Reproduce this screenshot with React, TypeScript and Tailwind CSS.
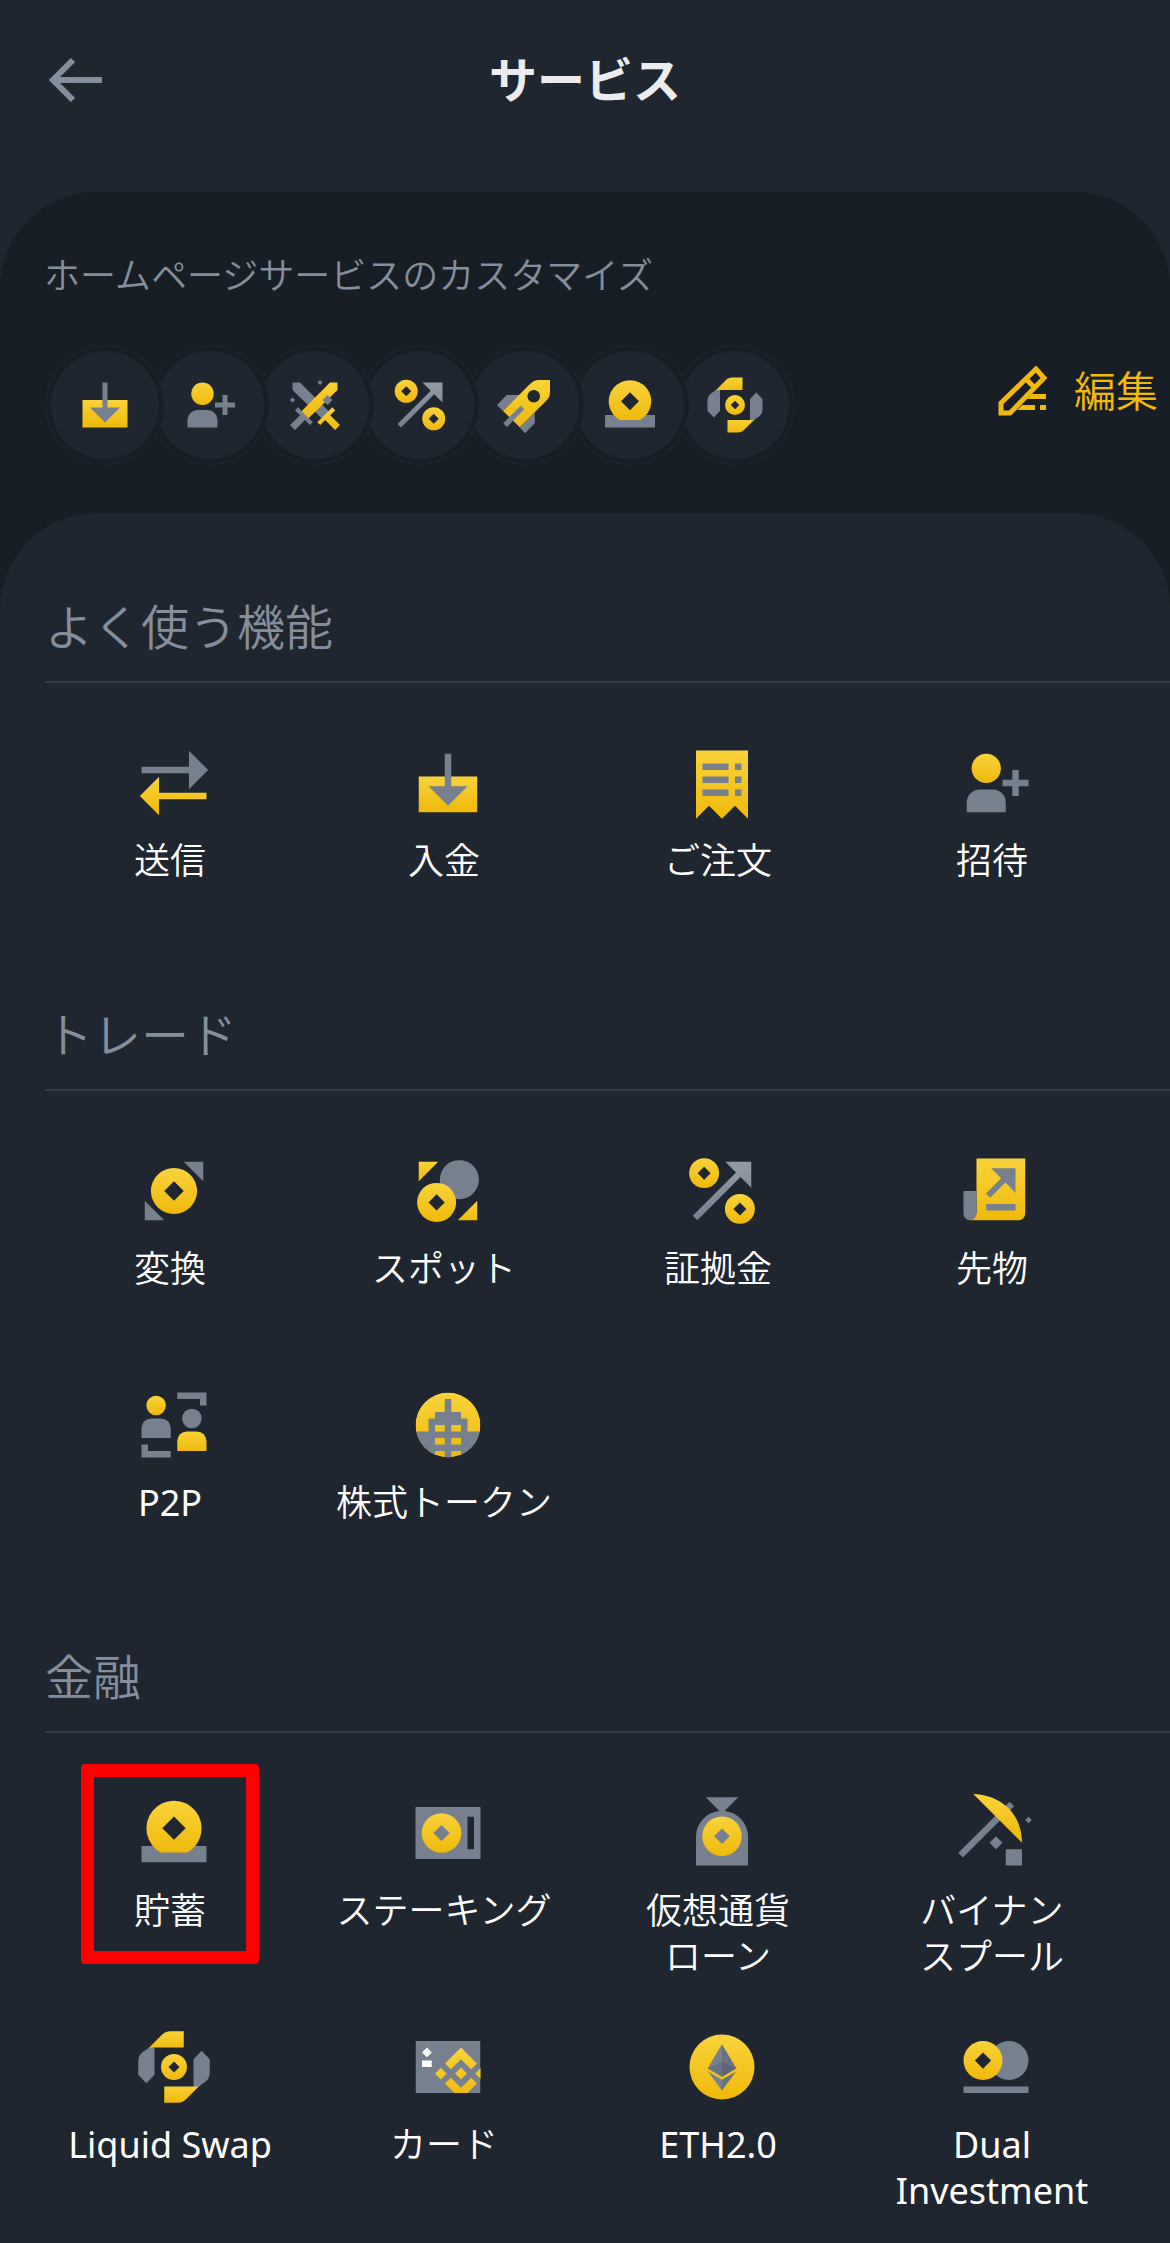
import type { ReactNode } from "react";

const GOLD = "url(#gold)";
const GRAY = "#76808f";
const INK = "#202630";

function GradientDefs() {
  return (
    <svg className="absolute h-0 w-0" aria-hidden="true">
      <defs>
        <linearGradient id="gold" x1="0" y1="0" x2="0" y2="1">
          <stop offset="0" stopColor="#f8d33a" />
          <stop offset="1" stopColor="#f0b90b" />
        </linearGradient>
        <linearGradient id="steel" x1="0" y1="0" x2="0" y2="1">
          <stop offset="0" stopColor="#929aa5" />
          <stop offset="1" stopColor="#76808f" />
        </linearGradient>
        <clipPath id="disc">
          <circle cx="12" cy="12" r="10" />
        </clipPath>
        <clipPath id="card">
          <path d="M2 4h20v16H2z" />
        </clipPath>
      </defs>
    </svg>
  );
}

function Diamond({ x, y, r, fill = INK }: { x: number; y: number; r: number; fill?: string }) {
  return <path d={`M${x} ${y - r}L${x + r} ${y}L${x} ${y + r}L${x - r} ${y}Z`} fill={fill} />;
}

function Coin({ x, y, r, hole, fill = INK }: { x: number; y: number; r: number; hole: number; fill?: string }) {
  return (
    <>
      <circle cx={x} cy={y} r={r} fill={GOLD} />
      <Diamond x={x} y={y} r={hole} fill={fill} />
    </>
  );
}

const icons = {
  send: (
    <>
      <path d="M2 7h14.6V2.1L22.5 8l-5.9 5.9V9H2z" fill={GRAY} />
      <path d="M22 15H7.4v-4.9L1.5 16l5.9 5.9V17H22z" fill={GOLD} />
    </>
  ),
  deposit: (
    <>
      <path d="M3 10h18v11H3z" fill={GOLD} />
      <path d="M11 3h2v10h5l-6 6-6-6h5z" fill={GRAY} />
    </>
  ),
  orders: (
    <>
      <path d="M4 2h16v21l-4-4-4 4-4-4-4 4z" fill={GOLD} />
      <path d="M6 6h8v2H6zM16 6h2v2h-2zM6 10h8v2H6zM16 10h2v2h-2zM6 14h8v2H6zM16 14h2v2h-2z" fill={GRAY} />
    </>
  ),
  invite: (
    <>
      <circle cx="9" cy="7.5" r="4.5" fill={GOLD} />
      <path d="M3 18a4 4 0 0 1 4-4h4a4 4 0 0 1 4 4v3H3zM17 8h2v3h3v2h-3v3h-2v-3h-3v-2h3z" fill={GRAY} />
    </>
  ),
  swords: (
    <>
      <path d="M3 3h3l12 12-2.8 2.8L3 6z" fill={GRAY} />
      <path d="M5.2 12.9L4 14.1l2 2L2 20l2 2 4-4 2 2 1.1-1.1z" fill={GRAY} />
      <path d="M18 3h3v3L9.4 17.3l-2.8-2.8z" fill={GOLD} />
      <path d="M18.9 12.9l1.2 1.2-2 2L22 20l-2 2-3.9-4-2 2-1.2-1.1z" fill={GOLD} />
      <Diamond x={17} y={10} r={2} fill={GRAY} />
      <Diamond x={14} y={3} r={1} fill={GRAY} />
      <Diamond x={3} y={10} r={1} fill={GRAY} />
    </>
  ),
  margin: (
    <>
      <path d="M13 3h8v8l-3.3-3.3L4.4 21 3 19.6 16.3 6.3z" fill="url(#steel)" />
      <Coin x={6.5} y={6.5} r={4.6} hole={2} />
      <Coin x={17.5} y={17.5} r={4.6} hole={2} />
    </>
  ),
  rocket: (
    <>
      <path d="M.8 12l3.9-4h5l-6.5 6.4zM15.9 15v4.3l-3.9 4-2.1-2.4z" fill={GRAY} />
      <path d="M22 2v4.8c0 1.5-.5 2.6-1.6 3.6L9.9 20.9l-6.7-6.5L13.9 3.7C15 2.6 16.2 2 17.6 2z" fill={GOLD} />
      <circle cx="15.5" cy="8.5" r="2.5" fill={INK} />
      <path d="M10.3 12.3l1.4 1.4-6.9 7.1-1.5-1.5z" fill={GRAY} />
    </>
  ),
  savings: (
    <>
      <path d="M2 16h20v5H2z" fill={GRAY} />
      <path d="M7.9 18a8.5 8.5 0 1 1 8.2 0z" fill={GOLD} />
      <Diamond x={12} y={10.5} r={3.6} />
    </>
  ),
  swap: (
    <>
      <path d="M15 1v5H6L3.7 6.7 8.3 2.1C9 1.4 9.8 1 10.8 1z" fill={GOLD} />
      <path d="M9 23v-5h9l2.3-.7-4.6 4.6c-.7.7-1.5 1.1-2.5 1.1z" fill={GOLD} />
      <path d="M6 6v8.4L3.5 17 1 14.4v-4C1 8.5 2 7.4 3.5 6.7L4.2 6z" fill={GRAY} />
      <path d="M18 18V9.6L20.5 7 23 9.6v4c0 1.9-1 3-2.5 3.7l-.7.7z" fill={GRAY} />
      <Coin x={12} y={12} r={4} hole={1.7} />
    </>
  ),
  convert: (
    <>
      <path d="M15 3h6v6zM3 15v6h6z" fill={GRAY} />
      <Coin x={12} y={12} r={7.1} hole={3} />
    </>
  ),
  spot: (
    <>
      <circle cx="15.5" cy="8.5" r="6" fill={GRAY} />
      <Coin x={8.5} y={15.5} r={6} hole={2.5} />
      <path d="M3 3h6L3 9z" fill={GOLD} />
      <path d="M21 15v6h-6z" fill={GOLD} />
    </>
  ),
  futures: (
    <>
      <path d="M6 2h15v17a2 2 0 0 1-2 2H4l2-2z" fill={GOLD} />
      <path d="M2 12h4v7a2 2 0 0 1-4 0z" fill={GRAY} />
      <path d="M10.5 5H18v7.5l-3.1-3.1-4.7 4.7-1.3-1.3 4.7-4.7zM9 16h9v2H9z" fill={GRAY} />
    </>
  ),
  p2p: (
    <>
      <circle cx="6.5" cy="6" r="3" fill={GOLD} />
      <path d="M2 13a3 3 0 0 1 3-3h3a3 3 0 0 1 3 3v3H2z" fill={GRAY} />
      <circle cx="17.5" cy="10" r="3" fill={GRAY} />
      <path d="M13 17a3 3 0 0 1 3-3h3a3 3 0 0 1 3 3v3h-9z" fill={GOLD} />
      <path d="M13 2h9v4h-2V4h-7zM2 18h2v2h7v2H2z" fill={GRAY} />
    </>
  ),
  stock: (
    <g clipPath="url(#disc)">
      <circle cx="12" cy="12" r="10" fill={GOLD} />
      <path
        d="M11 4h2v4h3v2h2v4h4v8h-6v-2h-3v2h-2v-2H8v2H2v-8h4v-4h2V8h3zM8 12v2h3v-2zM13 12v2h3v-2zM8 16v2h3v-2zM13 16v2h3v-2z"
        fill={GRAY}
        fillRule="evenodd"
      />
    </g>
  ),
  staking: (
    <>
      <path d="M2 4h20v16H2z" fill={GRAY} />
      <Coin x={10} y={12} r={6.1} hole={2.5} fill={GRAY} />
      <path d="M18 7h2v10h-2z" fill={INK} />
    </>
  ),
  loan: (
    <>
      <path d="M7 1h10l-4.2 4.2A8 8 0 0 1 20 13v9H4v-9a8 8 0 0 1 7.2-7.8z" fill={GRAY} />
      <Coin x={12} y={13} r={6.1} hole={2.4} fill={GRAY} />
    </>
  ),
  pool: (
    <>
      <path d="M16.2 2.4l1.4 1.4L1.8 19.5.4 18.1z" fill={GRAY} />
      <path d="M5 0c9 .3 15 6.5 15 15z" fill={GOLD} />
      <Diamond x={12} y={15} r={2} fill={GRAY} />
      <Diamond x={22} y={8} r={1} fill={GRAY} />
      <path d="M15 17h5v5h-5z" fill={GRAY} />
    </>
  ),
  card: (
    <g clipPath="url(#card)">
      <path d="M2 4h20v16H2z" fill={GRAY} />
      <Diamond x={5.5} y={7.5} r={1.5} fill="#fff" />
      <path d="M4 10h3v2H4z" fill="#fff" />
      <path
        transform="translate(8 6) scale(.1264)"
        d="M38.7 53.2L63.3 28.6l24.6 24.6 14.3-14.3L63.3 0 24.4 38.9zM0 63.3L14.3 49l14.3 14.3-14.3 14.3zM38.7 73.4L63.3 98l24.6-24.6 14.3 14.3-38.9 38.9-38.9-38.9zM98 63.3L112.3 49l14.3 14.3-14.3 14.3zM77.8 63.3L63.3 77.8 48.8 63.3l14.5-14.5z"
        fill={GOLD}
      />
    </g>
  ),
  eth: (
    <>
      <circle cx="12" cy="12" r="10" fill={GOLD} />
      <path d="M12 5v10l-4.4-2.6z" fill="#76808f" />
      <path d="M12 5v10l4.4-2.6z" fill="#697281" />
      <path d="M12 10.4V15l-4.4-2.6z" fill="#697281" />
      <path d="M12 10.4V15l4.4-2.6z" fill="#5c6573" />
      <path d="M7.6 13.3L12 15.9v3.3z" fill="#76808f" />
      <path d="M16.4 13.3L12 15.9v3.3z" fill="#697281" />
    </>
  ),
  dual: (
    <>
      <circle cx="16" cy="10" r="6" fill={GRAY} />
      <Coin x={8} y={10} r={6} hole={2.5} />
      <path d="M2 18h20v2H2z" fill={GRAY} />
    </>
  ),
} satisfies Record<string, ReactNode>;

type IconName = keyof typeof icons;

function ServiceIcon({ name, className }: { name: IconName; className: string }) {
  return (
    <svg viewBox="0 0 24 24" className={className} aria-hidden="true">
      {icons[name]}
    </svg>
  );
}

type Service = { icon: IconName; label: string[]; latin?: boolean; highlighted?: boolean };

const sections: { title: string; services: Service[] }[] = [
  {
    title: "よく使う機能",
    services: [
      { icon: "send", label: ["送信"] },
      { icon: "deposit", label: ["入金"] },
      { icon: "orders", label: ["ご注文"] },
      { icon: "invite", label: ["招待"] },
    ],
  },
  {
    title: "トレード",
    services: [
      { icon: "convert", label: ["変換"] },
      { icon: "spot", label: ["スポット"] },
      { icon: "margin", label: ["証拠金"] },
      { icon: "futures", label: ["先物"] },
      { icon: "p2p", label: ["P2P"], latin: true },
      { icon: "stock", label: ["株式トークン"] },
    ],
  },
  {
    title: "金融",
    services: [
      { icon: "savings", label: ["貯蓄"], highlighted: true },
      { icon: "staking", label: ["ステーキング"] },
      { icon: "loan", label: ["仮想通貨", "ローン"] },
      { icon: "pool", label: ["バイナン", "スプール"] },
      { icon: "swap", label: ["Liquid Swap"], latin: true },
      { icon: "card", label: ["カード"] },
      { icon: "eth", label: ["ETH2.0"], latin: true },
      { icon: "dual", label: ["Dual", "Investment"], latin: true },
    ],
  },
];

const pinned: IconName[] = ["deposit", "invite", "swords", "margin", "rocket", "savings", "swap"];

function ServiceButton({ service }: { service: Service }) {
  return (
    <button type="button" className="relative flex min-h-[186px] flex-col items-center text-white">
      <ServiceIcon name={service.icon} className="ml-2 size-[78px] overflow-visible" />
      <span className={`mt-4 text-4xl leading-[46px] ${service.latin ? "font-normal" : "font-[350]"}`}>
        {service.label.map((line) => (
          <span key={line} className="block whitespace-nowrap">
            {line}
          </span>
        ))}
      </span>
      {service.highlighted && (
        <span className="absolute -top-[30px] left-1/2 h-[200px] w-[178px] -translate-x-1/2 rounded border-[13px] border-[#ff0000]" />
      )}
    </button>
  );
}

export default function App() {
  return (
    <div className="min-h-screen bg-[#202630] font-['Noto_Sans','Noto_Sans_CJK_JP',sans-serif] font-[350]">
      <GradientDefs />
      <header className="grid h-48 grid-cols-[1fr_auto_1fr] items-start px-[45px] pt-11">
        <button type="button" aria-label="戻る" className="flex h-[72px] w-[60px] items-center text-[#848e9c]">
          <svg viewBox="0 0 60 48" className="h-12 w-[60px]" aria-hidden="true">
            <path d="M28 4L8 24 28 44M9 24h48" fill="none" stroke="currentColor" strokeWidth="6" />
          </svg>
        </button>
        <h1 className="text-5xl leading-[72px] font-bold text-[#eaecef]">サービス</h1>
      </header>

      <main className="rounded-t-[96px] bg-[#181e25]">
        <section className="pt-[60px] pb-12">
          <h2 className="pl-11 text-4xl leading-12 text-[#848e9c]">ホームページサービスのカスタマイズ</h2>
          <div className="mt-[45px] flex items-start justify-between pr-3 pl-[45px]">
            <ul className="flex">
              {pinned.map((name, index) => (
                <li
                  key={name}
                  className="relative -mr-[15px] rounded-full border border-[#21272f] bg-[#181e25] p-[5px]"
                  style={{ zIndex: pinned.length - index }}
                >
                  <div className="flex size-[108px] items-center justify-center rounded-full bg-[#202630]">
                    <ServiceIcon name={name} className="size-[60px]" />
                  </div>
                </li>
              ))}
            </ul>
            <button type="button" className="mt-4 flex items-center gap-6 text-[42px] leading-[60px] text-[#f0b90b]">
              <svg viewBox="0 0 54 54" className="size-[54px]" aria-hidden="true">
                <g fill="none" stroke="currentColor" strokeWidth="5">
                  <path d="M5 39L40 5l8 9-34 35H5z" />
                  <path d="M30 15l9 9" />
                </g>
                <path d="M36 30h14v5H31zM26 41h13v5H21zM44 41h6v5h-6z" fill="currentColor" />
              </svg>
              編集
            </button>
          </div>
        </section>

        <div className="flex flex-col gap-[69px] rounded-t-[96px] bg-[#202630] pt-[78px] pb-7">
          {sections.map((section) => (
            <section key={section.title}>
              <h2 className="ml-[45px] border-b-2 border-[#333a45] pb-[18px] text-5xl leading-[72px] text-[#848e9c]">
                {section.title}
              </h2>
              <div className="grid grid-cols-4 gap-y-12 pt-[61px] pr-[41px] pl-[33px]">
                {section.services.map((service) => (
                  <ServiceButton key={service.icon} service={service} />
                ))}
              </div>
            </section>
          ))}
        </div>
      </main>
    </div>
  );
}
